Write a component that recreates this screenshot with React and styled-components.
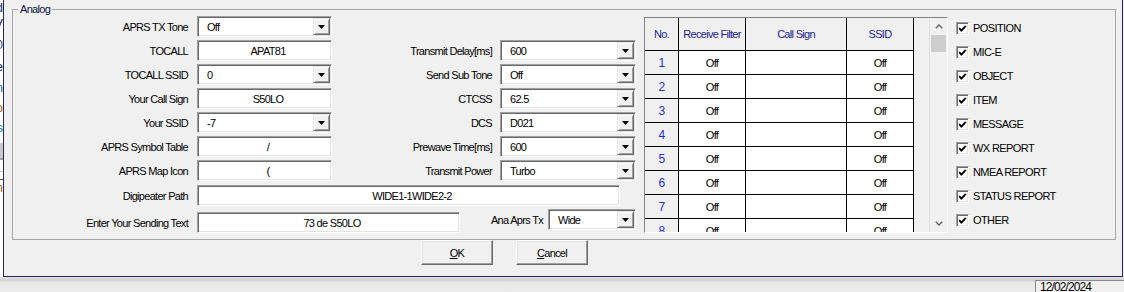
import React from "react";
import styled, { createGlobalStyle } from "styled-components";

const GlobalStyle = createGlobalStyle`
  html, body {
    margin: 0;
    padding: 0;
    background: #f0f0f0;
  }
  body {
    font-family: "Liberation Sans", Arial, sans-serif;
    font-size: 11px;
    letter-spacing: -0.7px;
    color: #000;
  }
`;

const Screen = styled.div`
  width: 1124px;
  height: 292px;
  overflow: hidden;
  display: flex;
  flex-direction: column;
  background: #f0f0f0;
`;

const Top = styled.div`
  display: flex;
  height: 277px;
`;

const Sliver = styled.div`
  width: 3px;
  flex: none;
  overflow: hidden;
  background: #fff;
  display: flex;
  flex-direction: column;
`;

const SliverLine = styled.div`
  height: ${(p) => p.$h}px;
  flex: none;
  display: flex;
  justify-content: flex-end;
  align-items: center;
  font-size: 13px;
  letter-spacing: 0;
  color: ${(p) => p.$color || "#000"};
  background: ${(p) => p.$bg || "transparent"};
  white-space: nowrap;
`;

const Dialog = styled.div`
  width: 1120px;
  height: 277px;
  box-sizing: border-box;
  flex: none;
  border: 1px solid #2d2160;
  border-top: none;
  display: flex;
  flex-direction: column;
  background: #f0f0f0;
`;

const GroupBox = styled.fieldset`
  margin: 3px 6px 0 8px;
  padding: 0;
  min-width: 0;
  border: 1px solid #a6a6a6;
`;

const GroupTitle = styled.legend`
  margin-left: 5px;
  padding: 0 2px;
  line-height: 13px;
  color: #10104a;
`;

const GroupBody = styled.div`
  display: flex;
  height: 223px;
`;

const Form = styled.div`
  width: 623px;
  flex: none;
  display: grid;
  grid-template-columns: 184px 135px 168px 136px;
  grid-template-rows: repeat(7, 21px) 22px 24px;
  row-gap: 3px;
`;

const Slot = styled.div`
  grid-row: ${(p) => p.$row};
  grid-column: ${(p) => p.$col};
  display: flex;
  align-items: ${(p) => p.$align || "stretch"};
`;

const Label = styled.div`
  height: 21px;
  display: flex;
  align-items: center;
  justify-content: flex-end;
  padding-right: ${(p) => p.$pad}px;
  white-space: nowrap;
  flex: 1;
  align-self: ${(p) => p.$self || "auto"};
`;

const Sunken = styled.div`
  box-sizing: border-box;
  height: 21px;
  width: ${(p) => p.$w}px;
  flex: none;
  background: #fff;
  border: 1px solid;
  border-color: #a0a0a0 #fff #fff #a0a0a0;
  box-shadow: inset 1px 1px #696969, inset -1px -1px #e3e3e3;
  padding: 1px;
  display: flex;
  align-items: center;
  white-space: nowrap;
  overflow: hidden;
  align-self: ${(p) => p.$self || "auto"};
`;

const TextValue = styled.span`
  flex: 1;
  text-align: center;
  padding-left: 7px;
`;

const ComboValue = styled.span`
  flex: 1;
  padding-left: 8px;
`;

const DropButton = styled.span`
  width: 17px;
  height: 17px;
  box-sizing: border-box;
  flex: none;
  background: #f0f0f0;
  border: 1px solid;
  border-color: #e3e3e3 #696969 #696969 #e3e3e3;
  box-shadow: inset 1px 1px #fff, inset -1px -1px #a0a0a0;
  display: flex;
  align-items: center;
  justify-content: center;
`;

const AnaGroup = styled.div`
  margin-left: auto;
  display: flex;
  align-items: center;
  gap: 5px;
  align-self: flex-start;
`;

const GridFrame = styled.div`
  margin: 1px 0 0 8px;
  width: 304px;
  height: 216px;
  box-sizing: border-box;
  flex: none;
  border: 1px solid;
  border-color: #828282 #fff #fff #828282;
  display: flex;
  overflow: hidden;
  background: #f0f0f0;
`;

const Table = styled.table`
  border-collapse: separate;
  border-spacing: 0;
  table-layout: fixed;
  width: 269px;
  flex: none;
  align-self: flex-start;
`;

const HeadCell = styled.th`
  box-sizing: border-box;
  height: 33px;
  padding: 0;
  font-weight: normal;
  color: #202090;
  background: #f0f0f0;
  border-right: 1px solid #000;
  border-bottom: 1px solid #000;
  text-align: center;
  white-space: nowrap;
`;

const Cell = styled.td`
  box-sizing: border-box;
  height: 24px;
  padding: 0;
  text-align: center;
  background: ${(p) => (p.$head ? "#f0f0f0" : "#fff")};
  color: ${(p) => (p.$head ? "#2a2ad8" : "#000")};
  font-size: ${(p) => (p.$head ? "12px" : "11px")};
  border-right: 1px solid #000;
  border-bottom: 1px solid #000;
`;

const Filler = styled.div`
  width: 15px;
  flex: none;
`;

const ScrollBar = styled.div`
  width: 18px;
  box-sizing: border-box;
  flex: none;
  border-left: 1px solid #e2e2e2;
  display: flex;
  flex-direction: column;
  background: #f0f0f0;
`;

const ScrollArrow = styled.div`
  height: 17px;
  flex: none;
  display: flex;
  align-items: center;
  justify-content: center;
  margin-top: ${(p) => (p.$down ? "auto" : "0")};
`;

const ScrollThumb = styled.div`
  height: 17px;
  margin: 0 1px;
  background: #cdcdcd;
`;

const CheckList = styled.div`
  margin-left: 8px;
  display: flex;
  flex-direction: column;
`;

const CheckRow = styled.label`
  height: 24px;
  display: flex;
  align-items: center;
  gap: 4px;
  white-space: nowrap;
  letter-spacing: -0.6px;
`;

const CheckBox = styled.span`
  width: 13px;
  height: 13px;
  box-sizing: border-box;
  flex: none;
  background: #fff;
  border: 1px solid;
  border-color: #a0a0a0 #fff #fff #a0a0a0;
  box-shadow: inset 1px 1px #696969, inset -1px -1px #e3e3e3;
  display: flex;
  align-items: center;
  justify-content: center;
`;

const ButtonRow = styled.div`
  display: flex;
  gap: 23px;
  padding-left: 417px;
`;

const Button = styled.button`
  width: 72px;
  height: 25px;
  box-sizing: border-box;
  padding: 0;
  font: inherit;
  letter-spacing: inherit;
  color: #000;
  background: #f0f0f0;
  border: 1px solid;
  border-color: #fff #696969 #696969 #fff;
  box-shadow: inset -1px -1px #a0a0a0, inset 1px 1px #e3e3e3;
  border-radius: 0;

  u {
    text-decoration: underline;
  }
`;

const StatusBar = styled.div`
  height: 15px;
  display: flex;
  justify-content: flex-end;
  background: linear-gradient(#e2e2e2 0, #d0d0d0 3px, #e6e6e6 5px, #ececec 100%);
`;

const StatusPanel = styled.div`
  width: 84px;
  margin-top: 3px;
  border-left: 1px solid #8a8a8a;
  border-top: 1px solid #8a8a8a;
  padding-left: 4px;
  font-size: 12px;
  line-height: 12px;
  letter-spacing: -0.9px;
  background: #f0f0f0;
`;

const sliverLines = [
  { h: 14, c: "d", color: "#203070" },
  { h: 19, c: "V", color: "#1a1a40" },
  { h: 22, c: "0", color: "#3050a0" },
  { h: 22, c: "e", color: "#202040" },
  { h: 20, c: "n", color: "#207080" },
  { h: 20, c: "o", color: "#c06010" },
  { h: 20, c: "s", color: "#2080a0" },
  { h: 6 },
  { h: 15, bg: "#c8c8c8" },
  { h: 2, bg: "#a0a0a0" },
  { h: 11 },
  { h: 1, bg: "#c0c0c0" },
  { h: 7 },
  { h: 1, bg: "#505050" },
  { h: 14, c: "n", color: "#c06000" },
];

const leftFields = [
  { label: "APRS TX Tone", kind: "combo", value: "Off" },
  { label: "TOCALL", kind: "text", value: "APAT81" },
  { label: "TOCALL SSID", kind: "combo", value: "0" },
  { label: "Your Call Sign", kind: "text", value: "S50LO" },
  { label: "Your SSID", kind: "combo", value: "-7" },
  { label: "APRS Symbol Table", kind: "text", value: "/" },
  { label: "APRS Map Icon", kind: "text", value: "(" },
];

const rightFields = [
  { label: "Transmit Delay[ms]", value: "600" },
  { label: "Send Sub Tone", value: "Off" },
  { label: "CTCSS", value: "62.5" },
  { label: "DCS", value: "D021" },
  { label: "Prewave Time[ms]", value: "600" },
  { label: "Transmit Power", value: "Turbo" },
];

const filters = [
  "POSITION",
  "MIC-E",
  "OBJECT",
  "ITEM",
  "MESSAGE",
  "WX REPORT",
  "NMEA REPORT",
  "STATUS REPORT",
  "OTHER",
];

const Triangle = () => (
  <svg width="7" height="4" viewBox="0 0 7 4">
    <polygon points="0,0 7,0 3.5,4" fill="#000" />
  </svg>
);

const Chevron = ({ down }) => (
  <svg width="8" height="5" viewBox="0 0 8 5">
    <polyline
      points={down ? "0.8,0.8 4,4 7.2,0.8" : "0.8,4.2 4,1 7.2,4.2"}
      fill="none"
      stroke="#606060"
      strokeWidth="1.3"
    />
  </svg>
);

const Tick = () => (
  <svg width="9" height="9" viewBox="0 0 9 9">
    <path d="M1.2 4.2 L3.4 6.6 L7.8 1.8" fill="none" stroke="#000" strokeWidth="1.9" />
  </svg>
);

function Combo({ value, width, self }) {
  return (
    <Sunken $w={width} $self={self}>
      <ComboValue>{value}</ComboValue>
      <DropButton>
        <Triangle />
      </DropButton>
    </Sunken>
  );
}

function TextBox({ value, width, self }) {
  return (
    <Sunken $w={width} $self={self}>
      <TextValue>{value}</TextValue>
    </Sunken>
  );
}

export default function App() {
  return (
    <>
      <GlobalStyle />
      <Screen>
        <Top>
          <Sliver>
            {sliverLines.map((l, i) => (
              <SliverLine key={i} $h={l.h} $color={l.color} $bg={l.bg}>
                {l.c ? "Ww" + l.c : null}
              </SliverLine>
            ))}
          </Sliver>
          <Dialog>
            <GroupBox>
              <GroupTitle>Analog</GroupTitle>
              <GroupBody>
                <Form>
                  {leftFields.map((f, i) => (
                    <React.Fragment key={f.label}>
                      <Slot $row={i + 1} $col={1}>
                        <Label $pad={9}>{f.label}</Label>
                      </Slot>
                      <Slot $row={i + 1} $col={2}>
                        {f.kind === "combo" ? (
                          <Combo value={f.value} width={135} />
                        ) : (
                          <TextBox value={f.value} width={135} />
                        )}
                      </Slot>
                    </React.Fragment>
                  ))}
                  {rightFields.map((f, i) => (
                    <React.Fragment key={f.label}>
                      <Slot $row={i + 2} $col={3}>
                        <Label $pad={8}>{f.label}</Label>
                      </Slot>
                      <Slot $row={i + 2} $col={4}>
                        <Combo value={f.value} width={136} />
                      </Slot>
                    </React.Fragment>
                  ))}
                  <Slot $row={8} $col={1}>
                    <Label $pad={9} $self="flex-end">
                      Digipeater Path
                    </Label>
                  </Slot>
                  <Slot $row={8} $col="2 / 5">
                    <TextBox value="WIDE1-1WIDE2-2" width={423} self="flex-end" />
                  </Slot>
                  <Slot $row={9} $col={1}>
                    <Label $pad={9} $self="flex-end">
                      Enter Your Sending Text
                    </Label>
                  </Slot>
                  <Slot $row={9} $col="2 / 5">
                    <TextBox value="73 de S50LO" width={263} self="flex-end" />
                    <AnaGroup>
                      <span>Ana Aprs Tx</span>
                      <Combo value="Wide" width={88} />
                    </AnaGroup>
                  </Slot>
                </Form>

                <GridFrame>
                  <Table>
                    <colgroup>
                      <col style={{ width: 34 }} />
                      <col style={{ width: 67 }} />
                      <col style={{ width: 101 }} />
                      <col style={{ width: 67 }} />
                    </colgroup>
                    <thead>
                      <tr>
                        <HeadCell>No.</HeadCell>
                        <HeadCell>Receive Filter</HeadCell>
                        <HeadCell>Call Sign</HeadCell>
                        <HeadCell>SSID</HeadCell>
                      </tr>
                    </thead>
                    <tbody>
                      {[1, 2, 3, 4, 5, 6, 7, 8].map((n) => (
                        <tr key={n}>
                          <Cell $head>{n}</Cell>
                          <Cell>Off</Cell>
                          <Cell />
                          <Cell>Off</Cell>
                        </tr>
                      ))}
                    </tbody>
                  </Table>
                  <Filler />
                  <ScrollBar>
                    <ScrollArrow>
                      <Chevron />
                    </ScrollArrow>
                    <ScrollThumb />
                    <ScrollArrow $down>
                      <Chevron down />
                    </ScrollArrow>
                  </ScrollBar>
                </GridFrame>

                <CheckList>
                  {filters.map((f) => (
                    <CheckRow key={f}>
                      <CheckBox>
                        <Tick />
                      </CheckBox>
                      {f}
                    </CheckRow>
                  ))}
                </CheckList>
              </GroupBody>
            </GroupBox>

            <ButtonRow>
              <Button>
                <u>O</u>K
              </Button>
              <Button>
                <u>C</u>ancel
              </Button>
            </ButtonRow>
          </Dialog>
        </Top>
        <StatusBar>
          <StatusPanel>12/02/2024</StatusPanel>
        </StatusBar>
      </Screen>
    </>
  );
}
